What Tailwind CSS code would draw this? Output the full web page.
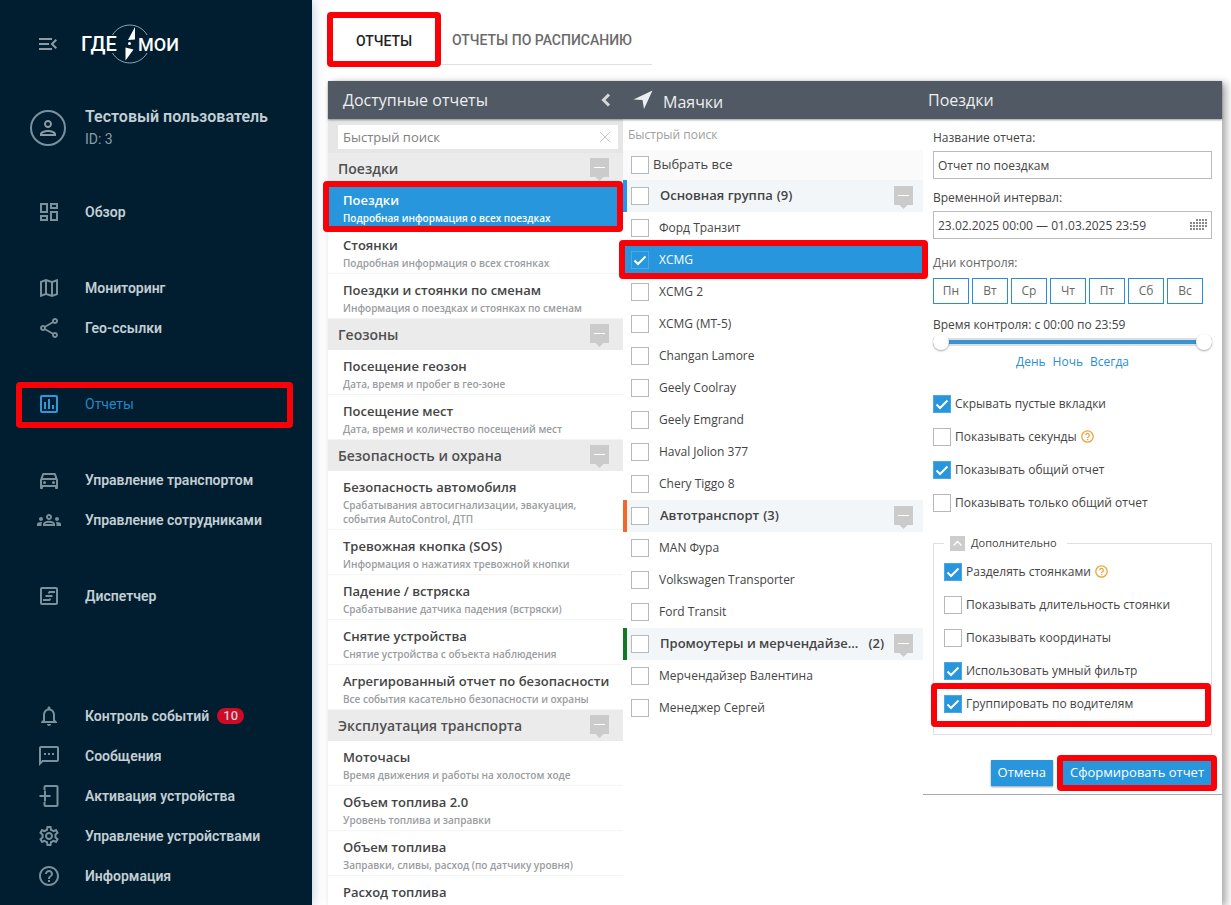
<!DOCTYPE html>
<html lang="ru">
<head>
  <meta charset="UTF-8">
  <meta name="viewport" content="width=device-width, initial-scale=1.0">
  <script src="https://cdn.jsdelivr.net/npm/@tailwindcss/browser@4"></script>
  <title>Отчеты</title>
</head>
<body class="flex h-screen overflow-hidden bg-white font-['Open_Sans',sans-serif] text-xs text-[#444]">

  <!-- Боковое меню -->
  <aside class="z-10 flex w-[312px] shrink-0 flex-col bg-[#001e2f] pt-6 pb-[9px] font-[Roboto,sans-serif] text-sm text-[#c3ced5] shadow-[0_0_12px_rgba(0,60,110,0.3)]">
    <div class="flex h-10 items-center gap-[21px] pl-9">
      <button type="button" aria-label="Свернуть меню" class="text-[#8b9ca7]">
        <svg class="size-6" viewBox="0 0 24 24" fill="currentColor"><path d="M3 18h13v-2H3v2zm0-5h10v-2H3v2zm0-7v2h13V6H3zm18 9.59L17.42 12 21 8.41 19.59 7l-5 5 5 5L21 15.59z"/></svg>
      </button>
      <a href="#" aria-label="ГдеМои">
        <svg class="h-[42px] w-[102px]" viewBox="0 0 102 42" fill="#fff">
          <path d="M31.500 12a20 20 0 0 1 34.600 0M31.500 30a20 20 0 0 0 34.600 0" fill="none" stroke="#8fa5b3"/>
          <text x="0" y="28" font-family="Roboto" font-size="20" font-weight="500">ГДЕ</text>
          <text x="57" y="28" font-family="Roboto" font-size="18" font-weight="500">МОИ</text>
          <path d="M54 4v12.500l-7 .5zM44.500 37.500V24.500l8 2z"/>
          <circle cx="48.500" cy="20.500" r="1.500"/>
        </svg>
      </a>
    </div>

    <div class="mt-[42px] flex items-center gap-[19px] pl-[30px]">
      <span class="flex size-9 items-center justify-center rounded-full border-2 border-[#7b909d] text-[#8b9ca7]">
        <svg class="size-6" viewBox="0 0 24 24" fill="currentColor"><path d="M12 6c1.100 0 2 .9 2 2s-.9 2-2 2-2-.9-2-2 .9-2 2-2m0 10c2.700 0 5.800 1.290 6 2H6c.23-.72 3.310-2 6-2m0-12C9.790 4 8 5.790 8 8s1.790 4 4 4 4-1.790 4-4-1.790-4-4-4zm0 10c-2.670 0-8 1.340-8 4v2h16v-2c0-2.660-5.330-4-8-4z"/></svg>
      </span>
      <div>
        <div class="text-base leading-[22px] font-semibold">Тестовый пользователь</div>
        <div class="leading-[22px] text-[#8b9ca7]">ID: 3</div>
      </div>
    </div>

    <nav id="menu" class="mt-[42px] flex flex-1 flex-col"></nav>
  </aside>

  <main class="flex min-w-0 flex-1 flex-col pr-[9px] pl-4">
    <!-- Вкладки -->
    <div class="mt-4 flex font-[Roboto,sans-serif] text-sm font-medium">
      <div class="relative flex h-[49px] w-28 items-center justify-center">
        <button type="button" class="text-[#222]">ОТЧЕТЫ</button>
        <span class="pointer-events-none absolute -inset-x-px -top-1 -bottom-0.5 rounded border-6 border-[#fb0007]"></span>
      </div>
      <button type="button" class="h-[49px] border-b border-[#e0e0e0] pr-5 pl-3 text-[#6b6b6b]">ОТЧЕТЫ ПО РАСПИСАНИЮ</button>
    </div>

    <div class="mt-4 flex min-h-0 flex-1 flex-col bg-white shadow-[4px_2px_8px_rgba(0,0,0,0.35)]">
      <header class="z-10 flex h-[38px] shrink-0 items-center bg-[#515a64] text-base text-[#eceef0] shadow-[0_1px_2px_rgba(0,0,0,0.4)]">
        <div class="flex w-[295px] shrink-0 items-center justify-between pr-3 pl-[15px]">
          <h2>Доступные отчеты</h2>
          <button type="button" aria-label="Свернуть" class="text-[#d5d8db]">
            <svg class="h-[14px] w-[10px]" viewBox="0 0 10 14" fill="none" stroke="currentColor" stroke-width="3"><path d="M8 1.500L2.500 7 8 12.500"/></svg>
          </button>
        </div>
        <div class="flex w-[300px] shrink-0 items-center gap-2.5 pl-2.5">
          <svg class="size-5" viewBox="0 0 20 20" fill="currentColor"><path d="M19.500.5L.5 9.500l9 .5 1.500 9z"/></svg>
          <h2 class="pt-1">Маячки</h2>
        </div>
        <h2 class="pl-[5px]">Поездки</h2>
      </header>

      <div class="flex min-h-0 flex-1">
        <!-- Доступные отчеты -->
        <section class="w-[295px] shrink-0">
          <div class="relative h-[34px] bg-[#e6e6e6] pt-1.5 pr-[5px] pl-2.5">
            <input type="text" aria-label="Поиск отчета" placeholder="Быстрый поиск" class="h-6 w-full bg-white px-[5px] text-[13px] outline-none placeholder:text-[#808080]">
            <button type="button" aria-label="Очистить" class="absolute top-3 right-3 text-[#c4c4c4]">
              <svg class="size-3" viewBox="0 0 12 12" stroke="currentColor"><path d="M1 1l10 10M11 1L1 11"/></svg>
            </button>
          </div>
          <div id="reports"></div>
        </section>

        <!-- Маячки -->
        <section class="w-[300px] shrink-0">
          <input type="text" aria-label="Поиск маячка" placeholder="Быстрый поиск" class="block h-[31px] w-full px-[5px] outline-none placeholder:text-[#a0a0a0]">
          <div id="trackers"></div>
        </section>

        <!-- Параметры отчета -->
        <section class="min-w-0 flex-1">
          <form class="flex flex-col border-b border-[#a9a9ad] px-2.5 pt-2.5 pb-2">
            <label for="title" class="leading-[18px]">Название отчета:</label>
            <input id="title" type="text" value="Отчет по поездкам" class="mt-1 h-7 border border-[#bbb] px-1">

            <label for="period" class="mt-2.5 leading-[18px]">Временной интервал:</label>
            <div class="relative mt-1 flex">
              <input id="period" type="text" value="23.02.2025 00:00 — 01.03.2025 23:59" class="h-7 w-full border border-[#bbb] px-1">
              <svg id="calendar" class="absolute top-2 right-[5px] h-[11px] w-[17px]" viewBox="0 0 17 11" fill="#888"></svg>
            </div>

            <div class="mt-[15px] leading-[18px] text-[#666]">Дни контроля:</div>
            <div id="days" class="mt-1.5 flex gap-[3px]"></div>

            <div class="mt-3 leading-[18px]">Время контроля: с 00:00 по 23:59</div>
            <div class="relative mt-1 h-2 bg-[#dcdee2] py-[2px]">
              <div class="mx-2 h-1 bg-[#3a94cf]"></div>
              <input type="range" min="0" max="1439" value="0" aria-label="Начало" class="pointer-events-none absolute inset-x-0 -top-1 h-4 w-full appearance-none bg-transparent [&::-webkit-slider-thumb]:pointer-events-auto [&::-webkit-slider-thumb]:size-4 [&::-webkit-slider-thumb]:appearance-none [&::-webkit-slider-thumb]:rounded-full [&::-webkit-slider-thumb]:bg-white [&::-webkit-slider-thumb]:shadow-[0_1px_2px_rgba(0,0,0,0.35)]">
              <input type="range" min="0" max="1439" value="1439" aria-label="Конец" class="pointer-events-none absolute inset-x-0 -top-1 h-4 w-full appearance-none bg-transparent [&::-webkit-slider-thumb]:pointer-events-auto [&::-webkit-slider-thumb]:size-4 [&::-webkit-slider-thumb]:appearance-none [&::-webkit-slider-thumb]:rounded-full [&::-webkit-slider-thumb]:bg-white [&::-webkit-slider-thumb]:shadow-[0_1px_2px_rgba(0,0,0,0.35)]">
            </div>
            <div class="mt-[7px] flex justify-center gap-[7px] leading-[18px] text-[#2a8fd0]">
              <a href="#">День</a>
              <a href="#">Ночь</a>
              <a href="#">Всегда</a>
            </div>

            <div id="options" class="mt-4"></div>

            <fieldset class="mt-[15px] border border-[#dfdfdf] px-2.5 pb-[14px]">
              <legend class="flex h-[18px] items-center gap-1.5 px-1.5 pr-2.5 text-[11px]">
                <button type="button" aria-label="Свернуть" class="flex size-[15px] items-center justify-center bg-[#ccc] text-white">
                  <svg class="size-[9px]" viewBox="0 0 9 9" fill="none" stroke="currentColor" stroke-width="1.500"><path d="M.5 6.500l4-4 4 4"/></svg>
                </button>
                Дополнительно
              </legend>
              <div id="extra" class="mt-[3px]"></div>
            </fieldset>

            <div class="mt-[25px] flex justify-end gap-[9px] text-[13px] text-white">
              <button type="button" class="h-[26px] bg-[#2796dc] px-[7px] shadow-[0_1px_2px_rgba(0,0,0,0.4)]">Отмена</button>
              <div class="relative">
                <button type="submit" class="h-[26px] bg-[#2796dc] px-2">Сформировать отчет</button>
                <span class="pointer-events-none absolute -inset-[5px] rounded border-6 border-[#fb0007]"></span>
              </div>
            </div>
          </form>
        </section>
      </div>
    </div>
  </main>

  <script>
    // меню: группы пунктов [название, иконка]
    const menu = [
      [["Обзор", '<path d="M19 5v2h-4V5h4M9 5v6H5V5h4m10 8v6h-4v-6h4M9 17v2H5v-2h4M21 3h-8v6h8V3zM11 3H3v10h8V3zm10 8h-8v10h8V11zm-10 4H3v6h8v-6z"/>']],
      [
        ["Мониторинг", '<path d="M20.5 3l-.16.03L15 5.1 9 3 3.36 4.9c-.21.07-.36.25-.36.48V20.5c0 .28.22.5.5.5l.16-.03L9 18.9l6 2.1 5.64-1.9c.21-.07.36-.25.36-.48V3.5c0-.28-.22-.5-.5-.5zM10 5.47l4 1.4v11.66l-4-1.4V5.47zm-5 .99l3-1.01v11.7l-3 1.16V6.46zm14 11.08l-3 1.01V6.86l3-1.16v11.84z"/>'],
        ["Гео-ссылки", '<path d="M18 16.08c-.76 0-1.44.3-1.96.77L8.91 12.7c.05-.23.09-.46.09-.7s-.04-.47-.09-.7l7.05-4.11c.54.5 1.25.81 2.04.81 1.66 0 3-1.34 3-3s-1.34-3-3-3-3 1.34-3 3c0 .24.04.47.09.7L8.04 9.81C7.5 9.31 6.79 9 6 9c-1.66 0-3 1.34-3 3s1.34 3 3 3c.79 0 1.5-.31 2.04-.81l7.12 4.16c-.05.21-.08.43-.08.65 0 1.61 1.31 2.92 2.92 2.92s2.92-1.31 2.92-2.92-1.31-2.92-2.92-2.92zM18 4c.55 0 1 .45 1 1s-.45 1-1 1-1-.45-1-1 .45-1 1-1zM6 13c-.55 0-1-.45-1-1s.45-1 1-1 1 .45 1 1-.45 1-1 1zm12 7.02c-.55 0-1-.45-1-1s.45-1 1-1 1 .45 1 1-.45 1-1 1z"/>'],
      ],
      [["Отчеты", '<path d="M19 3H5c-1.1 0-2 .9-2 2v14c0 1.1.9 2 2 2h14c1.1 0 2-.9 2-2V5c0-1.1-.9-2-2-2zm0 16H5V5h14v14zM7 10h2v7H7zm4-3h2v10h-2zm4 6h2v4h-2z"/>']],
      [
        ["Управление транспортом", '<path d="M18.92 6.01C18.72 5.42 18.16 5 17.5 5h-11c-.66 0-1.21.42-1.42 1.01L3 12v8c0 .55.45 1 1 1h1c.55 0 1-.45 1-1v-1h12v1c0 .55.45 1 1 1h1c.55 0 1-.45 1-1v-8l-2.08-5.99zM6.85 7h10.29l1.04 3H5.81l1.04-3zM19 17H5v-5h14v5z"/><circle cx="7.5" cy="14.5" r="1.5"/><circle cx="16.5" cy="14.5" r="1.5"/>'],
        ["Управление сотрудниками", '<path d="M4 13c1.1 0 2-.9 2-2s-.9-2-2-2-2 .9-2 2 .9 2 2 2zm1.13 1.1c-.37-.06-.74-.1-1.13-.1-.99 0-1.93.21-2.78.58C.48 14.9 0 15.62 0 16.43V18h4.5v-1.61c0-.83.23-1.61.63-2.29zM20 13c1.1 0 2-.9 2-2s-.9-2-2-2-2 .9-2 2 .9 2 2 2zm4 3.43c0-.81-.48-1.53-1.22-1.85-.85-.37-1.79-.58-2.78-.58-.39 0-.76.04-1.13.1.4.68.63 1.46.63 2.29V18H24v-1.57zm-7.76-2.78c-1.17-.52-2.61-.9-4.24-.9-1.63 0-3.07.39-4.24.9C6.68 14.13 6 15.21 6 16.39V18h12v-1.61c0-1.18-.68-2.26-1.76-2.74zM8.07 16c.09-.23.13-.39.91-.69.97-.38 1.99-.56 3.02-.56s2.05.18 3.02.56c.77.3.81.46.91.69H8.07zM12 8c.55 0 1 .45 1 1s-.45 1-1 1-1-.45-1-1 .45-1 1-1zM9 9c0 1.66 1.34 3 3 3s3-1.34 3-3-1.34-3-3-3-3 1.34-3 3z"/>'],
      ],
      [["Диспетчер", '<path d="M19 3H5c-1.1 0-2 .9-2 2v14c0 1.100.9 2 2 2h14c1.1 0 2-.9 2-2V5c0-1.1-.9-2-2-2zm0 16H5V5h14v14z"/><path d="M18 8h-5.500l-1 1.500M15.500 12h-7M6 16h6.500l1-1.500" fill="none" stroke="currentColor" stroke-width="1.800"/>']],
      [
        ["Контроль событий", '<path d="M12 22c1.1 0 2-.9 2-2h-4c0 1.1.9 2 2 2zm6-6v-5c0-3.07-1.63-5.64-4.5-6.32V4c0-.83-.67-1.5-1.5-1.5s-1.5.67-1.5 1.5v.68C7.64 5.36 6 7.92 6 11v5l-2 2v1h16v-1l-2-2zm-2 1H8v-6c0-2.48 1.51-4.5 4-4.5s4 2.02 4 4.5v6z"/>', 10],
        ["Сообщения", '<path d="M20 2H4c-1.1 0-2 .9-2 2v18l4-4h14c1.1 0 2-.9 2-2V4c0-1.1-.9-2-2-2zm0 14H5.17L4 17.17V4h16v12zM7 9h2v2H7zm4 0h2v2h-2zm4 0h2v2h-2z"/>'],
        ["Активация устройства", '<path d="M7.5 6V3q0-1 1-1h11q1 0 1 1v18q0 1-1 1h-11q-1 0-1-1v-3M2.500 12h11M8 6.500v11" fill="none" stroke="currentColor" stroke-width="2"/>'],
        ["Управление устройствами", '<path d="M19.43 12.98c.04-.32.07-.64.07-.98 0-.34-.03-.66-.07-.98l2.11-1.65c.19-.15.24-.42.12-.64l-2-3.46c-.09-.16-.26-.25-.44-.25-.06 0-.12.01-.17.03l-2.49 1c-.52-.4-1.08-.73-1.69-.98l-.38-2.65C14.46 2.18 14.25 2 14 2h-4c-.25 0-.46.18-.49.42l-.38 2.65c-.61.25-1.17.59-1.69.98l-2.49-1c-.06-.02-.12-.03-.18-.03-.17 0-.34.09-.43.25l-2 3.46c-.13.22-.07.49.12.64l2.11 1.65c-.04.32-.07.65-.07.98 0 .33.03.66.07.98l-2.11 1.65c-.19.15-.24.42-.12.64l2 3.46c.09.16.26.25.44.25.06 0 .12-.01.17-.03l2.49-1c.52.4 1.08.73 1.69.98l.38 2.65c.03.24.24.42.49.42h4c.25 0 .46-.18.49-.42l.38-2.65c.61-.25 1.17-.59 1.69-.98l2.49 1c.06.02.12.03.18.03.17 0 .34-.09.43-.25l2-3.46c.12-.22.07-.49-.12-.64l-2.11-1.65zm-1.98-1.71c.04.31.05.52.05.73 0 .21-.02.43-.05.73l-.14 1.13.89.7 1.08.84-.7 1.21-1.27-.51-1.04-.42-.9.68c-.43.32-.84.56-1.25.73l-1.06.43-.16 1.13-.2 1.35h-1.4l-.19-1.35-.16-1.13-1.06-.43c-.43-.18-.83-.41-1.23-.71l-.91-.7-1.06.43-1.27.51-.7-1.21 1.08-.84.89-.7-.14-1.13c-.03-.31-.05-.54-.05-.74s.02-.43.05-.73l.14-1.13-.89-.7-1.08-.84.7-1.21 1.27.51 1.04.42.9-.68c.43-.32.84-.56 1.25-.73l1.06-.43.16-1.13.2-1.35h1.39l.19 1.35.16 1.13 1.06.43c.43.18.83.41 1.23.71l.91.7 1.06-.43 1.27-.51.7 1.21-1.07.85-.89.7.14 1.13zM12 8c-2.21 0-4 1.79-4 4s1.79 4 4 4 4-1.79 4-4-1.79-4-4-4zm0 6c-1.1 0-2-.9-2-2s.9-2 2-2 2 .9 2 2-.9 2-2 2z"/>'],
        ["Информация", '<path d="M11 18h2v-2h-2v2zm1-16C6.48 2 2 6.48 2 12s4.48 10 10 10 10-4.48 10-10S17.52 2 12 2zm0 18c-4.41 0-8-3.59-8-8s3.59-8 8-8 8 3.59 8 8-3.59 8-8 8zm0-14c-2.21 0-4 1.79-4 4h2c0-1.1.9-2 2-2s2 .9 2 2c0 2-3 1.75-3 5h2c0-2.25 3-2.5 3-5 0-2.21-1.79-4-4-4z"/>'],
      ],
    ]

    const reports = [
      { title: "Поездки", items: [
        ["Поездки", "Подробная информация о всех поездках"],
        ["Стоянки", "Подробная информация о всех стоянках"],
        ["Поездки и стоянки по сменам", "Информация о поездках и стоянках по сменам"],
      ]},
      { title: "Геозоны", items: [
        ["Посещение геозон", "Дата, время и пробег в гео-зоне"],
        ["Посещение мест", "Дата, время и количество посещений мест"],
      ]},
      { title: "Безопасность и охрана", items: [
        ["Безопасность автомобиля", "Срабатывания автосигнализации, эвакуация, события AutoControl, ДТП"],
        ["Тревожная кнопка (SOS)", "Информация о нажатиях тревожной кнопки"],
        ["Падение / встряска", "Срабатывание датчика падения (встряски)"],
        ["Снятие устройства", "Снятие устройства с объекта наблюдения"],
        ["Агрегированный отчет по безопасности", "Все события касательно безопасности и охраны"],
      ]},
      { title: "Эксплуатация транспорта", items: [
        ["Моточасы", "Время движения и работы на холостом ходе"],
        ["Объем топлива 2.0", "Уровень топлива и заправки"],
        ["Объем топлива", "Заправки, сливы, расход (по датчику уровня)"],
        ["Расход топлива", ""],
      ]},
    ]

    const trackers = [
      { title: "Основная группа", border: "border-[#2196f3]", items: ["Форд Транзит", "XCMG", "XCMG 2", "XCMG (МТ-5)", "Changan Lamore", "Geely Coolray", "Geely Emgrand", "Haval Jolion 377", "Chery Tiggo 8"] },
      { title: "Автотранспорт", border: "border-[#f0692a]", items: ["MAN Фура", "Volkswagen Transporter", "Ford Transit"] },
      { title: "Промоутеры и мерчендайзе...", wide: true, border: "border-[#107a22]", items: ["Мерчендайзер Валентина", "Менеджер Сергей"] },
    ]

    const options = [["Скрывать пустые вкладки", true], ["Показывать секунды", false, true], ["Показывать общий отчет", true], ["Показывать только общий отчет", false]]
    const extra = [["Разделять стоянками", true, true], ["Показывать длительность стоянки", false], ["Показывать координаты", false], ["Использовать умный фильтр", true], ["Группировать по водителям", true]]

    const red = (pos) => `<span class="pointer-events-none absolute z-20 rounded border-6 border-[#fb0007] ${pos}"></span>`

    const box = (checked) => `
      <span class="relative size-[18px] shrink-0">
        <input type="checkbox" ${checked ? "checked" : ""} class="peer block size-[18px] appearance-none border border-[#b5b9bd] bg-white checked:border-[#4aa8e4] checked:bg-[#2796dc]">
        <svg class="pointer-events-none absolute inset-0 hidden size-[18px] peer-checked:block" viewBox="0 0 18 18" fill="none" stroke="#fff" stroke-width="2"><path d="M3.5 9.500l3.500 3.500 7.500-7.500"/></svg>
      </span>`

    const fold = `
      <button type="button" aria-label="Свернуть группу" class="shrink-0 text-[#cbcbcb]">
        <svg class="mt-0.5 h-[23px] w-[19px]" viewBox="0 0 19 23" fill="currentColor"><path d="M0 0h19v19h-5.500l-4 4-4-4H0z"/><path d="M4 9.500h11" stroke="#fff"/></svg>
      </button>`

    const help = `<svg class="ml-1 size-[13px] shrink-0" viewBox="0 0 13 13" fill="none" stroke="#eda43a" stroke-width="1.300"><circle cx="6.500" cy="6.500" r="5.700"/><path d="M4.700 5.300a1.800 1.800 0 1 1 2.700 1.500q-.9.500-.9 1.200M6.500 9v1.300"/></svg>`

    const menuItem = ([title, icon, badge]) => {
      const active = title === "Отчеты"
      return `
        <a href="#" class="relative flex h-10 items-center gap-6 pl-[37px] ${active ? "text-[#2687c5]" : "font-semibold"}">
          <svg class="size-6 ${active ? "text-[#2f97dc]" : "text-[#7b909d]"}" viewBox="0 0 24 24" fill="currentColor" fill-rule="evenodd">${icon}</svg>
          <span>${title}</span>
          ${badge ? `<span class="-ml-4 rounded-full bg-[#cf0a24] px-1.5 text-[13px] leading-4 font-medium">${badge}</span>` : ""}
          ${active ? red("left-4 right-[19px] -top-0.5 -bottom-1") : ""}
        </a>`
    }

    const option = ([title, checked, hint]) => `
      <label class="relative flex h-[33px] items-center">
        ${box(checked)}<span class="ml-1">${title}</span>${hint ? help : ""}
        ${title === "Группировать по водителям" ? red("-left-[13px] -right-[10px] -top-1 -bottom-[7px]") : ""}
      </label>`

    const reportItem = ([title, text], active) => `
      <a href="#" class="relative block border-b pt-1.5 pr-7 pb-[3px] pl-[15px] ${active ? "border-[#2796dc] bg-[#2796dc] text-white" : "border-[#f4f4f4]"}">
        <span class="block text-[13px] leading-5 font-semibold whitespace-nowrap">${title}</span>
        <span class="mt-px block text-[10px] leading-[14px] font-semibold ${active ? "" : "text-[#999ca0]"}">${text}</span>
        ${active ? red("-left-[5px] right-0 -top-[3px] -bottom-1") : ""}
      </a>`

    const tracker = (title) => `
      <label class="relative flex h-8 items-center gap-2.5 pl-2 ${title === "XCMG" ? "bg-[#2796dc] text-white" : ""}">
        ${box(title === "XCMG")}${title}
        ${title === "XCMG" ? red("-left-1 -right-[5px] -top-1 -bottom-[3px]") : ""}
      </label>`

    document.querySelector("#menu").innerHTML = menu
      .map((group) => `<div class="mb-9 last:mt-auto last:mb-0">${group.map(menuItem).join("")}</div>`).join("")

    document.querySelector("#reports").innerHTML = reports.map(({ title, items }, i) => `
      <h3 class="flex h-[31px] items-center justify-between bg-[#ebebeb] pr-[14px] pl-2.5 text-sm font-semibold text-[#505050]">${title}${fold}</h3>
      ${items.map((item, j) => reportItem(item, i === 0 && j === 0)).join("")}`).join("")

    document.querySelector("#trackers").innerHTML = `
      <label class="flex h-[30px] items-center gap-1 bg-[#fafafa] pl-2 text-[13px]">${box(false)}Выбрать все</label>` +
      trackers.map(({ title, items, border, wide }) => `
      <div class="flex h-8 items-center border-l-4 bg-[#f3f6f9] pr-2.5 pl-1 text-[13px] font-semibold ${border}">
        <label class="flex flex-1 items-center">${box(false)}<span class="ml-[11px]">${title}</span><span class="${wide ? "ml-2.5" : "ml-1"}">(${items.length})</span></label>${fold}
      </div>
      ${items.map(tracker).join("")}`).join("")

    document.querySelector("#options").innerHTML = options.map(option).join("")
    document.querySelector("#extra").innerHTML = extra.map(option).join("")
    document.querySelector("#days").innerHTML = ["Пн", "Вт", "Ср", "Чт", "Пт", "Сб", "Вс"]
      .map((day) => `<button type="button" class="h-[26px] w-9 border border-[#2a8fd0] text-[#666]">${day}</button>`).join("")

    // точки календаря: первый и последний столбец в каждом ряду
    document.querySelector("#calendar").innerHTML = [[2, 5], [0, 5], [0, 5], [0, 4]].map(([from, to], y) => {
      let row = ""
      for (let x = from; x <= to; x++) row += `<rect x="${x * 3}" y="${y * 3}" width="2" height="2"/>`
      return row
    }).join("")
  </script>
</body>
</html>
